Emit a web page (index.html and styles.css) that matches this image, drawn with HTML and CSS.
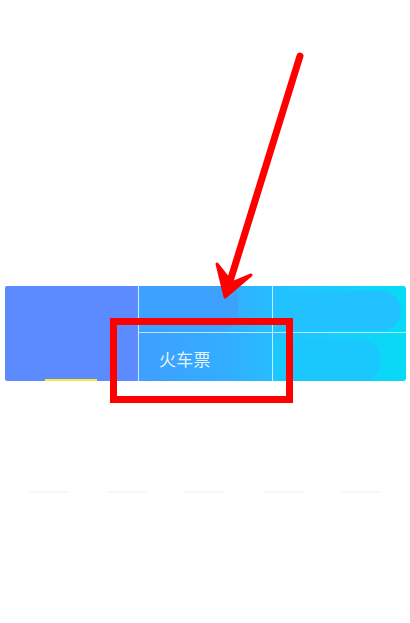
FILE: index.html
```html
<!DOCTYPE html>
<html lang="zh">
<head>
<meta charset="utf-8">
<title>火车票</title>
<link rel="stylesheet" href="styles.css">
</head>
<body>
<div class="page">
  <div class="banner">
    <div class="cell cell-left">
      <div class="blob blob-left"></div>
      <div class="underline"></div>
    </div>
    <div class="cell cell-mid-top">
      <div class="blob blob-mid"></div>
    </div>
    <div class="cell cell-right-top">
      <div class="blob blob-right-top"></div>
    </div>
    <div class="cell cell-mid-bottom">
      <span class="label">火车票</span>
    </div>
    <div class="cell cell-right-bottom">
      <div class="blob blob-right-bottom"></div>
    </div>
  </div>
  <div class="faint-row">
    <span></span><span></span><span></span><span></span><span></span>
  </div>
</div>
<svg class="annotation" width="410" height="623" viewBox="0 0 410 623" xmlns="http://www.w3.org/2000/svg">
  <rect x="113.5" y="321.5" width="176" height="78" fill="none" stroke="#ff0000" stroke-width="7"/>
  <line x1="300" y1="56" x2="227" y2="291" stroke="#ff0000" stroke-width="7" stroke-linecap="round"/>
  <path d="M217 264 L225 297 L251 275 L232 283 Z" fill="#ff0000" stroke="#ff0000" stroke-width="3" stroke-linejoin="round"/>
</svg>
</body>
</html>
```
FILE: styles.css
```css
html, body {
  margin: 0;
  padding: 0;
  background: #ffffff;
  font-family: "Noto Sans CJK SC", "Noto Sans", sans-serif;
}

.page {
  width: 410px;
  height: 623px;
  padding-top: 286px;
  box-sizing: border-box;
}

.banner {
  margin-left: 5px;
  width: 401px;
  height: 95px;
  border-radius: 3px;
  overflow: hidden;
  display: grid;
  grid-template-columns: 133px 134px 134px;
  grid-template-rows: 47px 48px;
  background: linear-gradient(90deg, #5c8cff 0%, #3f9fff 33%, #33adff 55%, #22c5ff 72%, #07dbf6 100%);
}

.cell {
  position: relative;
  overflow: hidden;
}

.cell-left {
  grid-row: 1 / 3;
  grid-column: 1;
  background: #5f8cff;
}

.cell-mid-top {
  grid-row: 1;
  grid-column: 2;
  border-left: 1px solid rgba(220, 245, 255, 0.9);
  border-bottom: 1px solid rgba(220, 245, 255, 0.8);
}

.cell-right-top {
  grid-row: 1;
  grid-column: 3;
  border-left: 1px solid rgba(220, 245, 255, 0.9);
  border-bottom: 1px solid rgba(220, 245, 255, 0.8);
}

.cell-mid-bottom {
  grid-row: 2;
  grid-column: 2;
  border-left: 1px solid rgba(220, 245, 255, 0.9);
  display: flex;
  align-items: center;
  padding-left: 20px;
}

.cell-right-bottom {
  grid-row: 2;
  grid-column: 3;
  border-left: 1px solid rgba(220, 245, 255, 0.9);
}

.blob {
  position: absolute;
}

.blob-left {
  left: -10px;
  top: -6px;
  width: 138px;
  height: 100px;
  border-radius: 0 16px 14px 0;
  background: #5b8bff;
  box-shadow: 2px 0 3px rgba(90, 140, 255, 0.4);
}

.underline {
  position: absolute;
  left: 40px;
  bottom: 0;
  width: 52px;
  height: 2px;
  background: #ffe83a;
}

.blob-mid {
  left: 0;
  top: -4px;
  width: 99px;
  height: 48px;
  border-radius: 0 16px 16px 0;
  background: #3da2ff;
}

.blob-right-top {
  left: 0;
  top: 5px;
  width: 128px;
  height: 40px;
  border-radius: 0 20px 20px 0;
  background: #21c2ff;
}

.blob-right-bottom {
  left: 0;
  top: 6px;
  width: 108px;
  height: 44px;
  border-radius: 0 22px 22px 0;
  background: #1bc8fd;
}

.label {
  position: relative;
  font-size: 17px;
  color: rgba(240, 250, 255, 0.95);
  letter-spacing: 0.3px;
  margin-top: 2px;
}

.faint-row {
  margin-top: 110px;
  display: flex;
  justify-content: space-around;
  padding: 0 10px;
}

.faint-row span {
  width: 40px;
  height: 2px;
  background: #f6f7f9;
}

.annotation {
  position: absolute;
  left: 0;
  top: 0;
}
```
